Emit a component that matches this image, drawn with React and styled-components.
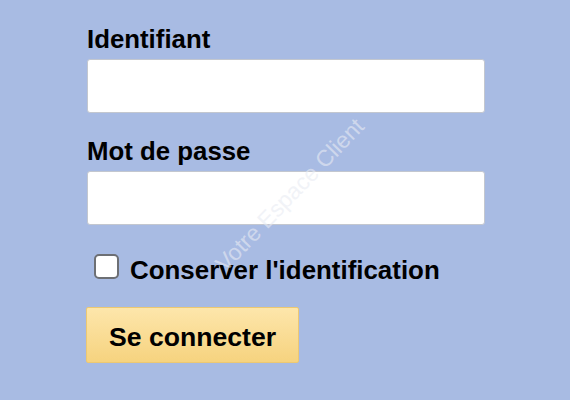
import React, { useState } from 'react'
import styled, { createGlobalStyle } from 'styled-components'

const GlobalStyle = createGlobalStyle`
  html, body {
    margin: 0;
    padding: 0;
    background: #a8bbe3;
  }
  body {
    font-family: 'Liberation Sans', Arial, Helvetica, sans-serif;
  }
`

const Page = styled.div`
  position: relative;
  width: 570px;
  height: 400px;
  overflow: hidden;
  background: #a8bbe3;
`

const Form = styled.form`
  display: flex;
  flex-direction: column;
  align-items: flex-start;
  padding: 24px 0 0 87px;
`

const Label = styled.label`
  display: block;
  font-size: 25.8px;
  line-height: 30px;
  font-weight: bold;
  color: #000;
  margin-top: ${(p) => (p.$first ? '0' : '23px')};
`

const Input = styled.input`
  box-sizing: border-box;
  width: 398px;
  height: 54px;
  margin-top: 5px;
  border: 1px solid #c3c7cf;
  border-radius: 3px;
  background: #fff;
  font-size: 20px;
  padding: 0 10px;
  outline: none;
`

const RememberRow = styled.label`
  display: flex;
  align-items: flex-start;
  gap: 11px;
  margin-top: 30px;
  padding-left: 7px;
  cursor: pointer;
`

const Box = styled.span`
  box-sizing: border-box;
  width: 25px;
  height: 25px;
  margin-top: -1px;
  border: 2px solid #6d6f74;
  border-radius: 5px;
  background: #fff;
  display: flex;
  align-items: center;
  justify-content: center;
`

const RememberText = styled.span`
  font-size: 25.9px;
  line-height: 30px;
  font-weight: bold;
  color: #000;
`

const Button = styled.button`
  box-sizing: border-box;
  height: 56px;
  margin-top: 22px;
  margin-left: -1px;
  padding: 14px 22px 10px;
  border: 1px solid #ecc873;
  border-radius: 2px;
  background: linear-gradient(to bottom, #fde6ab, #f6d37f);
  font-family: 'Liberation Sans', Arial, sans-serif;
  font-size: 26.6px;
  line-height: 30px;
  font-weight: bold;
  color: #000;
  cursor: pointer;
`

// filigrane posé par-dessus le formulaire
const Watermark = styled.span`
  position: absolute;
  left: 290px;
  top: 195px;
  transform: translate(-50%, -50%) rotate(-46deg);
  white-space: nowrap;
  font-size: 23px;
  color: rgba(232, 235, 243, 0.6);
  pointer-events: none;
`

const App = () => {
  const [remember, setRemember] = useState(false)
  return (
    <Page>
      <GlobalStyle />
      <Form onSubmit={(e) => e.preventDefault()}>
        <Label $first htmlFor="login">Identifiant</Label>
        <Input id="login" type="text" />
        <Label htmlFor="password">Mot de passe</Label>
        <Input id="password" type="password" />
        <RememberRow onClick={() => setRemember(!remember)}>
          <Box>
            {remember && (
              <svg width="16" height="16" viewBox="0 0 16 16">
                <path d="M3 8l3 3 7-7" stroke="#333" strokeWidth="2.5" fill="none" />
              </svg>
            )}
          </Box>
          <RememberText>Conserver l'identification</RememberText>
        </RememberRow>
        <Button type="submit">Se connecter</Button>
      </Form>
      <Watermark>Votre Espace Client</Watermark>
    </Page>
  )
}

export default App
